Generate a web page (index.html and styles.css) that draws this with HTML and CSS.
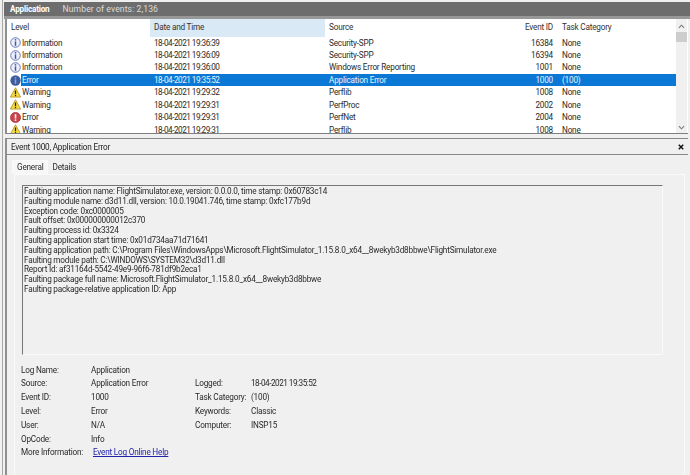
FILE: index.html
```html
<!DOCTYPE html>
<html lang="en">
<head>
<meta charset="utf-8">
<title>Event Viewer</title>
<link rel="stylesheet" href="styles.css">
</head>
<body>
<svg class="defs" width="0" height="0" aria-hidden="true">
  <defs>
    <symbol id="info" viewBox="0 0 12 12">
      <circle cx="6" cy="6" r="5.2" fill="#eef0fb" stroke="#5b6fb5" stroke-width="1"/>
      <rect x="5.2" y="2.3" width="1.6" height="1.6" fill="#3d55a8"/>
      <rect x="5.2" y="4.8" width="1.6" height="4.8" fill="#3d55a8"/>
    </symbol>
    <symbol id="info-sel" viewBox="0 0 12 12">
      <circle cx="6" cy="6" r="5.6" fill="#3f5b9f"/>
      <rect x="5.2" y="2.3" width="1.6" height="1.6" fill="#8fa3d0"/>
      <rect x="5.2" y="4.8" width="1.6" height="4.8" fill="#8fa3d0"/>
    </symbol>
    <symbol id="warn" viewBox="0 0 12 12">
      <path d="M6 .8 11.6 11H.4Z" fill="#f7dc3c" stroke="#a98a1a" stroke-width=".8" stroke-linejoin="round"/>
      <rect x="5.3" y="3.8" width="1.4" height="4" fill="#222"/>
      <rect x="5.3" y="8.6" width="1.4" height="1.4" fill="#222"/>
    </symbol>
    <symbol id="err" viewBox="0 0 12 12">
      <circle cx="6" cy="6" r="5.5" fill="#c9434b" stroke="#a52b33" stroke-width=".8"/>
      <rect x="5.1" y="2.3" width="1.8" height="4.8" fill="#fbe9ea"/>
      <rect x="5.1" y="8" width="1.8" height="1.8" fill="#fbe9ea"/>
    </symbol>
  </defs>
</svg>
<div class="app">
  <header class="topbar">
    <strong class="log">Application</strong>
    <span class="count">Number of events: 2,136</span>
  </header>
  <section class="list">
    <div class="table">
      <div class="row head">
        <span class="c-level">Level</span>
        <span class="c-date-head sorted">Date and Time</span>
        <span class="c-source">Source</span>
        <span class="c-id">Event ID</span>
        <span class="c-task">Task Category</span>
      </div>
      <div class="row"><span class="c-level"><svg class="ico"><use href="#info"/></svg><span class="lvl">Information</span></span><span class="c-date">18-04-2021 19:36:39</span><span class="c-source">Security-SPP</span><span class="c-id">16384</span><span class="c-task">None</span></div>
      <div class="row"><span class="c-level"><svg class="ico"><use href="#info"/></svg><span class="lvl">Information</span></span><span class="c-date">18-04-2021 19:36:09</span><span class="c-source">Security-SPP</span><span class="c-id">16394</span><span class="c-task">None</span></div>
      <div class="row"><span class="c-level"><svg class="ico"><use href="#info"/></svg><span class="lvl">Information</span></span><span class="c-date">18-04-2021 19:36:00</span><span class="c-source">Windows Error Reporting</span><span class="c-id">1001</span><span class="c-task">None</span></div>
      <div class="row selected"><span class="c-level"><svg class="ico"><use href="#info-sel"/></svg><span class="lvl">Error</span></span><span class="c-date">18-04-2021 19:35:52</span><span class="c-source">Application Error</span><span class="c-id">1000</span><span class="c-task">(100)</span></div>
      <div class="row"><span class="c-level"><svg class="ico"><use href="#warn"/></svg><span class="lvl">Warning</span></span><span class="c-date">18-04-2021 19:29:32</span><span class="c-source">Perflib</span><span class="c-id">1008</span><span class="c-task">None</span></div>
      <div class="row"><span class="c-level"><svg class="ico"><use href="#warn"/></svg><span class="lvl">Warning</span></span><span class="c-date">18-04-2021 19:29:31</span><span class="c-source">PerfProc</span><span class="c-id">2002</span><span class="c-task">None</span></div>
      <div class="row"><span class="c-level"><svg class="ico"><use href="#err"/></svg><span class="lvl">Error</span></span><span class="c-date">18-04-2021 19:29:31</span><span class="c-source">PerfNet</span><span class="c-id">2004</span><span class="c-task">None</span></div>
      <div class="row"><span class="c-level"><svg class="ico"><use href="#warn"/></svg><span class="lvl">Warning</span></span><span class="c-date">18-04-2021 19:29:31</span><span class="c-source">Perflib</span><span class="c-id">1008</span><span class="c-task">None</span></div>
    </div>
    <div class="scrollbar">
      <svg class="arrow" viewBox="0 0 8 5"><path d="M1 4 4 1l3 3" fill="none" stroke="#777" stroke-width="1.2"/></svg>
      <div class="track"><div class="thumb"></div></div>
      <svg class="arrow" viewBox="0 0 8 5"><path d="M1 1l3 3 3-3" fill="none" stroke="#777" stroke-width="1.2"/></svg>
    </div>
  </section>
  <section class="detail">
    <div class="title">
      <span>Event 1000, Application Error</span>
      <svg class="close" viewBox="0 0 8 8"><path d="M1 1l6 6M7 1 1 7" stroke="#111" stroke-width="1.9"/></svg>
    </div>
    <div class="tabs">
      <span class="tab active">General</span>
      <span class="tab">Details</span>
    </div>
    <div class="panel">
      <div class="message">
        <p>Faulting application name: FlightSimulator.exe, version: 0.0.0.0, time stamp: 0x60783c14</p>
        <p>Faulting module name: d3d11.dll, version: 10.0.19041.746, time stamp: 0xfc177b9d</p>
        <p>Exception code: 0xc0000005</p>
        <p>Fault offset: 0x000000000012c370</p>
        <p>Faulting process id: 0x3324</p>
        <p>Faulting application start time: 0x01d734aa71d71641</p>
        <p>Faulting application path: C:\Program Files\WindowsApps\Microsoft.FlightSimulator_1.15.8.0_x64__8wekyb3d8bbwe\FlightSimulator.exe</p>
        <p>Faulting module path: C:\WINDOWS\SYSTEM32\d3d11.dll</p>
        <p>Report Id: af31164d-5542-49e9-96f6-781df9b2eca1</p>
        <p>Faulting package full name: Microsoft.FlightSimulator_1.15.8.0_x64__8wekyb3d8bbwe</p>
        <p>Faulting package-relative application ID: App</p>
      </div>
      <div class="props">
        <span>Log Name:</span><span>Application</span><span></span><span></span>
        <span>Source:</span><span>Application Error</span><span>Logged:</span><span class="c-stamp">18-04-2021 19:35:52</span>
        <span>Event ID:</span><span>1000</span><span>Task Category:</span><span>(100)</span>
        <span>Level:</span><span>Error</span><span>Keywords:</span><span>Classic</span>
        <span>User:</span><span>N/A</span><span>Computer:</span><span>INSP15</span>
        <span>OpCode:</span><span>Info</span><span></span><span></span>
        <span>More Information:</span><a href="#" class="link">Event Log Online Help</a><span></span><span></span>
      </div>
    </div>
  </section>
</div>
</body>
</html>
```
FILE: styles.css
```css
* { box-sizing: border-box; }
html, body { margin: 0; height: 475px; overflow: hidden; }
body {
  background: #f0f0f0;
  color: #2a2a2a;
  font-family: Roboto, "Open Sans", "Liberation Sans", sans-serif;
  font-size: 8.2px;
  letter-spacing: -.2px;
  padding-left: 2px;
}
.defs { position: absolute; }
.app {
  height: 475px;
  border-left: 1px solid #a9a9a9;
  padding-top: 2px;
  display: flex;
  flex-direction: column;
  filter: blur(.25px);
}
.topbar {
  height: 17px;
  margin-left: 1px;
  background: #6d6d6d;
  border-bottom: 3px solid #989898;
  display: flex;
  align-items: center;
  padding-left: 6px;
  gap: 13px;
  color: #dcdcdc;
  flex: none;
}
.log { color: #fff; font-weight: 700; }
.count { font-size: 8.6px; letter-spacing: .1px; }
.list {
  height: 115px;
  margin: 0 2px 0 2px;
  flex: none;
  background: #fff;
  border-left: 2px solid #8f8f8f;
  border-bottom: 1px solid #808080;
  display: flex;
  overflow: hidden;
}
.table { flex: 1; min-width: 0; }
.row {
  display: grid;
  grid-template-columns: 143px 175px 173px 55px 1fr;
  height: 12.45px;
  line-height: 12.45px;
  white-space: nowrap;
}
.row > span { display: block; }
.head { height: 17.5px; line-height: 17.5px; color: #333; }
.head .c-level { padding-left: 4px; }
.sorted { background: #d9e9f6; }
.c-level { display: flex !important; align-items: center; padding-left: 3px; }
.c-date-head { padding-left: 4px; }
.c-date { padding-left: 4px; letter-spacing: -.5px; }
.c-stamp { letter-spacing: -.5px; }
.c-source { padding-left: 4px; }
.c-id { text-align: right; }
.c-task { padding-left: 9px; }
.ico { width: 11px; height: 11px; flex: none; margin-right: 1px; }
.selected { color: #e8f2fb; position: relative; }
.selected::before {
  content: "";
  position: absolute;
  left: 14px; right: 0; top: 0; bottom: 0;
  background: #0a78d4;
}
.selected > span { position: relative; }
.scrollbar {
  width: 11px;
  flex: none;
  background: #f0f0f0;
  margin-right: 1px;
  display: flex;
  flex-direction: column;
  align-items: center;
}
.arrow { width: 7px; height: 5px; margin: 5px 0 3px; flex: none; }
.track { flex: 1; width: 100%; }
.thumb { height: 10px; background: #cdcdcd; }
.detail {
  flex: 1;
  margin: 4px 2px 0 2px;
  border-left: 2px solid #8f8f8f;
  border-top: 1px solid #8a8a8a;
  min-height: 0;
  display: flex;
  flex-direction: column;
}
.title {
  height: 16px;
  flex: none;
  border-bottom: 1px solid #8a8a8a;
  display: flex;
  align-items: center;
  justify-content: space-between;
  padding: 0 4px 0 4px;
  color: #222;
}
.close { width: 6px; height: 6px; }
.tabs {
  display: flex;
  height: 19px;
  flex: none;
  padding: 5px 0 0 5px;
}
.tab { padding: 2px 4px 0 4px; height: 14px; }
.tab.active {
  background: #f7f7f7;
  border: 1px solid #fafafa;
  border-bottom: 0;
  padding: 1px 4px 0 4px;
}
.panel {
  flex: 1;
  min-height: 0;
  margin: 0 3px 0 7px;
  border-top: 1px solid #fafafa;
  border-left: 1px solid #fafafa;
  border-right: 1px solid #fafafa;
  padding: 10px 21px 0 7px;
}
.message {
  height: 170px;
  border-top: 1px solid #777;
  border-left: 1px solid #777;
  border-right: 1px solid #fafafa;
  border-bottom: 1px solid #fafafa;
  padding: 1px 0 0 1px;
}
.message p { margin: 0; height: 9.8px; line-height: 9.8px; white-space: nowrap; }
.props {
  display: grid;
  grid-template-columns: 70px 104px 56px 1fr;
  grid-auto-rows: 13.8px;
  line-height: 13.8px;
  margin: 8.6px 0 0 -1px;
  white-space: nowrap;
}
.link { color: #2222a8; text-decoration: underline; padding-left: 2px; }
```
